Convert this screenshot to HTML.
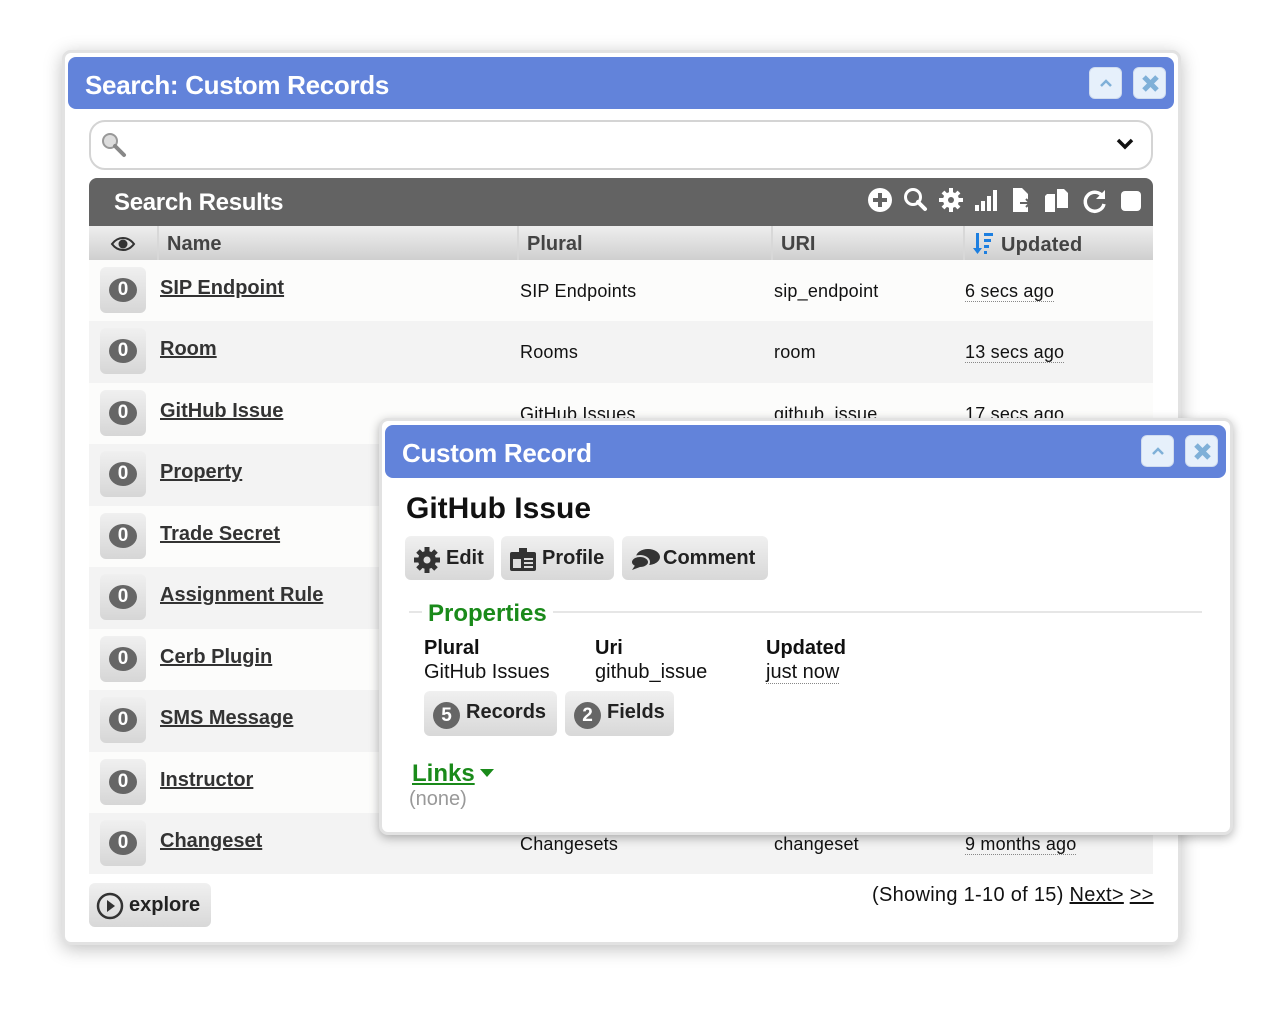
<!DOCTYPE html>
<html><head><meta charset="utf-8"><style>
*{box-sizing:border-box;margin:0;padding:0}
body{width:1280px;height:1009px;background:#fff;font-family:"Liberation Sans",Arial,sans-serif;position:relative;overflow:hidden}
.abs{position:absolute}
.win{position:absolute;background:#fff;border:3px solid #e2e2e2;border-radius:9px;box-shadow:0 4px 18px rgba(0,0,0,.25)}
.hdr{position:absolute;background:#6283da;border-radius:8px;color:#fff;font-weight:bold;font-size:26px;letter-spacing:-0.3px}
.hb{position:absolute;width:33px;height:32px;background:#e6f0fb;border-radius:6px;border:1px solid #d0dcef}
.row{position:absolute;left:89px;width:1064px;height:62px}
.badge{position:absolute;left:11px;top:7px;width:46px;height:46px;border-radius:6px;background:linear-gradient(#f0f0f0,#d6d6d6)}
.badge span{position:absolute;left:9px;top:11px;width:28px;height:24px;border-radius:50%;background:#666;color:#fff;font-weight:bold;font-size:19px;text-align:center;line-height:24px}
.nm{position:absolute;left:71px;top:17px;font-size:20px;font-weight:bold;color:#333;text-decoration:underline;letter-spacing:0px}
.c{position:absolute;top:21px;font-size:18px;color:#111;letter-spacing:0.2px}
.dt{border-bottom:1px dotted #888}
.btn{position:absolute;border-radius:6px;background:linear-gradient(#f0f0f0,#d8d8d8);font-weight:bold;font-size:20px;color:#222}
.cnum{display:inline-block;width:27px;height:27px;border-radius:50%;background:#666;color:#fff;text-align:center;line-height:27px;font-size:19px;margin-right:6px;vertical-align:-3px}
</style></head><body>

<div class="win" style="left:62px;top:50px;width:1119px;height:895px"></div>
<div class="hdr" style="left:68px;top:57px;width:1106px;height:52px;padding:13px 17px">Search: Custom Records</div>
<div class="hb" style="left:1089px;top:67px"><svg width="33" height="32"><path d="M11 18l5-5 5 5" stroke="#7fb0d8" stroke-width="2.5" fill="none"/></svg></div>
<div class="hb" style="left:1133px;top:67px"><svg width="33" height="32"><path d="M10 9l13 13M23 9l-13 13" stroke="#7fb0d8" stroke-width="5"/></svg></div>

<div class="abs" style="left:89px;top:120px;width:1064px;height:50px;border:2px solid #d4d4d4;border-radius:16px"></div>
<svg class="abs" style="left:100px;top:131px" width="28" height="28"><circle cx="10" cy="10" r="7" fill="#ddd" stroke="#999" stroke-width="2"/><path d="M15 15l9 9" stroke="#888" stroke-width="4" stroke-linecap="round"/></svg>
<svg class="abs" style="left:1115px;top:137px" width="20" height="14"><path d="M3 3l7 7 7-7" stroke="#111" stroke-width="3.5" fill="none"/></svg>

<div class="abs" style="left:89px;top:178px;width:1064px;height:48px;background:#636363;border-radius:8px 8px 0 0;color:#fff;font-weight:bold;font-size:24px;padding:11px 25px;letter-spacing:-0.3px">Search Results</div>
<svg class="abs" style="left:865px;top:185px" width="280" height="32" fill="#fff">
<circle cx="15" cy="15" r="12"/><path d="M15 8v14M8 15h14" stroke="#636363" stroke-width="4"/>
<circle cx="48" cy="12" r="7.5" fill="none" stroke="#fff" stroke-width="3"/><path d="M53 17l7 7" stroke="#fff" stroke-width="4" stroke-linecap="round"/>
<circle cx="86" cy="15" r="8"/><path d="M86 3v24M74 15h24M78 7l16 16M94 7L78 23" stroke="#fff" stroke-width="4"/><circle cx="86" cy="15" r="3" fill="#636363"/>
<rect x="110" y="20" width="4" height="6"/><rect x="116" y="16" width="4" height="10"/><rect x="122" y="11" width="4" height="15"/><rect x="128" y="5" width="4" height="21"/>
<path d="M148 3h9l6 6v18h-15z"/><path d="M155 18h9M161 14l4 4-4 4" stroke="#636363" stroke-width="2" fill="none"/>
<path d="M182 9h8v18h-10V11zM192 4h7l4 4v15h-11z"/>
<path d="M238 12a9.5 9.5 0 1 0 1 7" fill="none" stroke="#fff" stroke-width="3.5"/><path d="M240 5v9h-9z"/>
<rect x="256" y="6" width="20" height="20" rx="4"/>
</svg>

<div class="abs" style="left:89px;top:226px;width:1064px;height:34px;background:linear-gradient(#eee,#cfcfcf)"></div>
<div class="abs" style="left:157px;top:226px;width:2px;height:34px;background:#d8d8d8"></div>
<div class="abs" style="left:517px;top:226px;width:2px;height:34px;background:#d8d8d8"></div>
<div class="abs" style="left:771px;top:226px;width:2px;height:34px;background:#d8d8d8"></div>
<div class="abs" style="left:963px;top:226px;width:2px;height:34px;background:#d8d8d8"></div>
<svg class="abs" style="left:110px;top:235px" width="26" height="18"><path d="M2 9C8 1 18 1 24 9 18 17 8 17 2 9z" fill="none" stroke="#333" stroke-width="2"/><circle cx="13" cy="9" r="4.5" fill="#333"/></svg>
<div class="abs" style="left:167px;top:233px;font-weight:bold;font-size:20px;color:#444">Name</div>
<div class="abs" style="left:527px;top:233px;font-weight:bold;font-size:20px;color:#444">Plural</div>
<div class="abs" style="left:781px;top:233px;font-weight:bold;font-size:20px;color:#444">URI</div>
<svg class="abs" style="left:972px;top:231px" width="24" height="24" fill="#1d7fe0"><path d="M4 2h3v15h3l-4.5 6L1 17h3z"/><rect x="12" y="2" width="9" height="3"/><rect x="12" y="8" width="7" height="3"/><rect x="12" y="14" width="5" height="3"/><rect x="12" y="20" width="3" height="3"/></svg>
<div class="abs" style="left:1001px;top:234px;font-weight:bold;font-size:20px;color:#444;letter-spacing:0.2px">Updated</div>

<div class="row" style="top:260px;background:#fcfcfb"><div class="badge"><span>0</span></div><div class="nm">SIP Endpoint</div><div class="c" style="left:431px">SIP Endpoints</div><div class="c" style="left:685px">sip_endpoint</div><div class="c" style="left:876px"><span class="dt">6 secs ago</span></div></div>
<div class="row" style="top:321px;background:#f3f3f3"><div class="badge"><span>0</span></div><div class="nm">Room</div><div class="c" style="left:431px">Rooms</div><div class="c" style="left:685px">room</div><div class="c" style="left:876px"><span class="dt">13 secs ago</span></div></div>
<div class="row" style="top:383px;background:#fcfcfb"><div class="badge"><span>0</span></div><div class="nm">GitHub Issue</div><div class="c" style="left:431px">GitHub Issues</div><div class="c" style="left:685px">github_issue</div><div class="c" style="left:876px"><span class="dt">17 secs ago</span></div></div>
<div class="row" style="top:444px;background:#f3f3f3"><div class="badge"><span>0</span></div><div class="nm">Property</div></div>
<div class="row" style="top:506px;background:#fcfcfb"><div class="badge"><span>0</span></div><div class="nm">Trade Secret</div></div>
<div class="row" style="top:567px;background:#f3f3f3"><div class="badge"><span>0</span></div><div class="nm">Assignment Rule</div></div>
<div class="row" style="top:629px;background:#fcfcfb"><div class="badge"><span>0</span></div><div class="nm">Cerb Plugin</div></div>
<div class="row" style="top:690px;background:#f3f3f3"><div class="badge"><span>0</span></div><div class="nm">SMS Message</div></div>
<div class="row" style="top:752px;background:#fcfcfb"><div class="badge"><span>0</span></div><div class="nm">Instructor</div></div>
<div class="row" style="top:813px;background:#f3f3f3;height:61px"><div class="badge"><span>0</span></div><div class="nm">Changeset</div><div class="c" style="left:431px">Changesets</div><div class="c" style="left:685px">changeset</div><div class="c" style="left:876px"><span class="dt">9 months ago</span></div></div>

<div class="btn" style="left:89px;top:883px;width:122px;height:44px;padding:11px 0 0 40px">explore</div>
<svg class="abs" style="left:96px;top:892px" width="30" height="30"><circle cx="14" cy="14" r="12" fill="none" stroke="#333" stroke-width="2.5"/><path d="M11 8l8 6-8 6z" fill="#333"/></svg>
<div class="abs" style="left:872px;top:884px;font-size:20px;color:#111;letter-spacing:0.3px">(Showing 1-10 of 15) <u>Next&gt;</u> <u>&gt;&gt;</u></div>

<!-- popup -->
<div class="win" style="left:379px;top:418px;width:854px;height:417px;box-shadow:0 3px 10px rgba(0,0,0,.3)"></div>
<div class="hdr" style="left:385px;top:425px;width:841px;height:53px;padding:13px 17px">Custom Record</div>
<div class="hb" style="left:1141px;top:435px"><svg width="33" height="32"><path d="M11 18l5-5 5 5" stroke="#7fb0d8" stroke-width="2.5" fill="none"/></svg></div>
<div class="hb" style="left:1185px;top:435px"><svg width="33" height="32"><path d="M10 9l13 13M23 9l-13 13" stroke="#7fb0d8" stroke-width="5"/></svg></div>
<div class="abs" style="left:406px;top:492px;font-size:30px;font-weight:bold;color:#111">GitHub Issue</div>

<div class="btn" style="left:405px;top:536px;width:89px;height:44px;padding:11px 0 0 41px">Edit</div>
<svg class="abs" style="left:413px;top:546px" width="28" height="28" fill="#333"><circle cx="14" cy="14" r="9"/><path d="M14 1v26M1 14h26M5 5l18 18M23 5L5 23" stroke="#333" stroke-width="5"/><circle cx="14" cy="14" r="3.5" fill="#ddd"/></svg>
<div class="btn" style="left:501px;top:536px;width:113px;height:44px;padding:11px 0 0 41px">Profile</div>
<svg class="abs" style="left:509px;top:546px" width="28" height="26"><rect x="1" y="6" width="26" height="19" rx="2" fill="#333"/><rect x="10" y="2" width="8" height="6" fill="#333"/><rect x="4" y="13" width="8" height="9" fill="#ddd"/><path d="M15 13h9M15 17h9M15 21h9" stroke="#ddd" stroke-width="2"/></svg>
<div class="btn" style="left:622px;top:536px;width:146px;height:44px;padding:11px 0 0 41px">Comment</div>
<svg class="abs" style="left:629px;top:548px" width="32" height="24" fill="#333"><ellipse cx="19" cy="9" rx="12" ry="8"/><ellipse cx="11" cy="14" rx="9" ry="6" stroke="#ddd" stroke-width="2"/><path d="M3 22l4-6 4 3z"/></svg>

<div class="abs" style="left:409px;top:611px;width:793px;height:2px;background:#e6e6e6"></div>
<div class="abs" style="left:422px;top:600px;background:#fff;padding:0 6px;font-size:24px;font-weight:bold;color:#1a8a1a">Properties</div>
<div class="abs" style="left:424px;top:636px;font-size:20px;line-height:24px;color:#111"><b>Plural</b><br>GitHub Issues</div>
<div class="abs" style="left:595px;top:636px;font-size:20px;line-height:24px;color:#111"><b>Uri</b><br>github_issue</div>
<div class="abs" style="left:766px;top:636px;font-size:20px;line-height:24px;color:#111"><b>Updated</b><br><span class="dt">just now</span></div>
<div class="btn" style="left:424px;top:691px;width:133px;height:45px;padding:10px 0 0 9px"><span class="cnum">5</span>Records</div>
<div class="btn" style="left:565px;top:691px;width:109px;height:45px;padding:10px 0 0 9px"><span class="cnum">2</span>Fields</div>
<div class="abs" style="left:412px;top:760px;font-size:24px;font-weight:bold;color:#1a8a1a;text-decoration:underline">Links</div>
<svg class="abs" style="left:480px;top:769px" width="14" height="9"><path d="M0 0h14L7 8z" fill="#1a8a1a"/></svg>
<div class="abs" style="left:409px;top:788px;font-size:20px;color:#999">(none)</div>
</body></html>
